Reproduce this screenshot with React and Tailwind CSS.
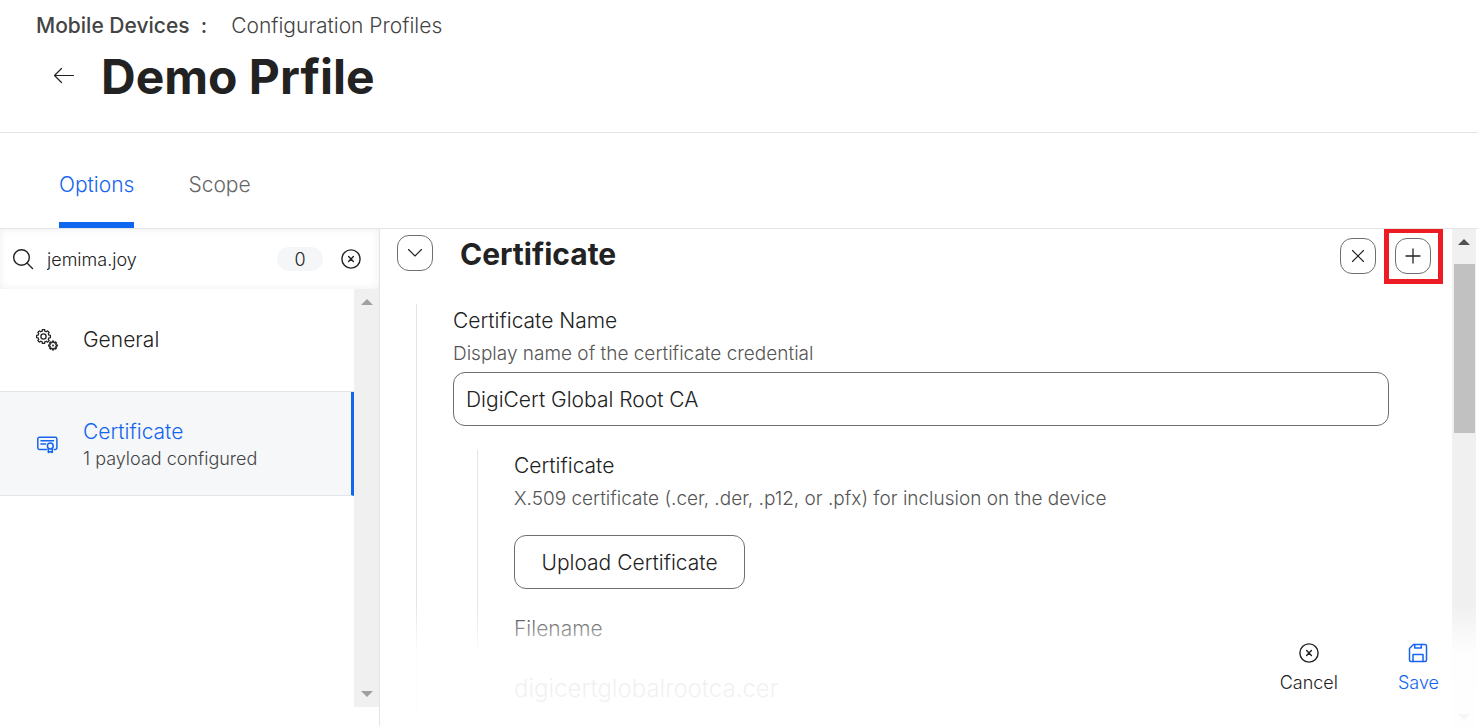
import { useState } from 'react'

const tabs = ['Options', 'Scope']

// outline of a gear with evenly spaced teeth
function gearPath(cx, cy, outer, inner, teeth) {
  const step = (Math.PI * 2) / teeth
  const pts = []
  for (let i = 0; i < teeth; i++) {
    const a = i * step - Math.PI / 2
    pts.push([inner, a - step * 0.3], [outer, a - step * 0.2], [outer, a + step * 0.2], [inner, a + step * 0.3])
  }
  return 'M' + pts.map(([r, a]) => `${(cx + r * Math.cos(a)).toFixed(2)} ${(cy + r * Math.sin(a)).toFixed(2)}`).join('L') + 'Z'
}

function Icon({ size = 20, width = 1.3, className = '', children }) {
  return (
    <svg width={size} height={size} viewBox={`0 0 ${size} ${size}`} fill="none" stroke="currentColor" strokeWidth={width}
      strokeLinecap="round" strokeLinejoin="round" className={`shrink-0 ${className}`} aria-hidden="true">
      {children}
    </svg>
  )
}

const CircleX = () => (
  <Icon width={1.4}>
    <circle cx="10" cy="10" r="9.1" />
    <path d="M7.6 7.6l4.8 4.8M12.4 7.6l-4.8 4.8" />
  </Icon>
)

const Gears = () => (
  <Icon size={22} width={1.3}>
    <path d={gearPath(7.5, 7.5, 7, 5.6, 8)} />
    <circle cx="7.5" cy="7.5" r="2.6" />
    <path d={gearPath(17, 16.5, 4.3, 3.1, 8)} />
    <circle cx="17" cy="16.5" r="0.4" />
  </Icon>
)

const CertificateIcon = () => (
  <Icon size={22} width={1.5}>
    <path d="M10.5 15.5h-7a1.7 1.7 0 0 1-1.700-1.700V5a1.700 1.700 0 0 1 1.700-1.700h15.700A1.700 1.700 0 0 1 20.900 5v8.800a1.700 1.700 0 0 1-1.700 1.700h-1" />
    <path d="M5 6.700h12.500M5 9.900h4.500" />
    <circle cx="14.300" cy="12" r="2.900" />
    <path d="M12.300 14.500v4l2-1 2 1v-4" />
  </Icon>
)

const SaveIcon = () => (
  <Icon size={20} width={1.5}>
    <path d="M5.500 1.500H17a1.500 1.500 0 0 1 1.500 1.500v14a1.500 1.500 0 0 1-1.500 1.500H3A1.500 1.500 0 0 1 1.500 17V5.500z" />
    <path d="M6.700 1.500v3.600h6.600V1.500M5 18.500v-7h10v7" />
  </Icon>
)

function Arrow({ down, className }) {
  return (
    <svg width="12" height="6" viewBox="0 0 12 6" className={className} aria-hidden="true">
      <path d={down ? 'M0 0h12L6 6z' : 'M0 6h12L6 0z'} fill="currentColor" />
    </svg>
  )
}

function SquareButton({ label, children }) {
  return (
    <button aria-label={label} className="flex size-9 items-center justify-center rounded-xl border border-[#6e6e73] bg-white text-[#222]">
      {children}
    </button>
  )
}

function PayloadItem({ icon, title, note, active }) {
  return (
    <li>
      <button className={`flex w-full items-center border-b border-[#e1e4e8] pl-9 text-left ${active ? 'h-26 border-r-3 border-r-[#0f67f0] bg-[#f5f7f9] pt-[2px] text-[#1565ee]' : 'h-[103px] text-[#222]'}`}>
        {icon}
        <span className="ml-[25px]">
          <span className="block text-[21px] leading-7">{title}</span>
          {note && <span className="block text-[18px] leading-[26px] text-[#444]">{note}</span>}
        </span>
      </button>
    </li>
  )
}

export default function App() {
  const [tab, setTab] = useState('Options')
  const [query, setQuery] = useState('jemima.joy')
  const [name, setName] = useState('DigiCert Global Root CA')

  return (
    <div className="flex h-screen flex-col overflow-hidden bg-white font-['Inter',sans-serif] font-light text-[#222]">
      <header className="h-[133px] shrink-0 border-b border-[#e4e4e4] pl-9 pt-3">
        <nav className="flex gap-6 text-[21px] leading-7 text-[#444]">
          <span className="font-medium">Mobile Devices&nbsp; :</span>
          <a href="#profiles">Configuration Profiles</a>
        </nav>
        <div className="flex items-center pl-[17px]">
          <button aria-label="Back" className="mr-[26px]">
            <Icon size={22} width={1.2}><path d="M20.500 9.500h-19M8.500 2.500l-7 7 7 7" /></Icon>
          </button>
          <h1 className="text-[48px] leading-[74px] font-bold">Demo Prfile</h1>
        </div>
      </header>

      <div role="tablist" className="flex h-24 shrink-0 gap-[54px] border-b border-[#e4e4e4] pl-[59px]">
        {tabs.map((t) => (
          <button key={t} role="tab" aria-selected={t === tab} onClick={() => setTab(t)}
            className={`border-b-6 pt-[14px] text-[21px] ${t === tab ? 'border-[#0f67f0] text-[#1565ee]' : 'border-transparent text-[#666]'}`}>
            {t}
          </button>
        ))}
      </div>

      <div className="flex min-h-0 flex-1">
        <aside className="flex w-[380px] shrink-0 flex-col border-r border-[#e4e4e4]">
          <label className="flex h-[60px] shrink-0 items-center pl-3 pr-[18px] shadow-[inset_0_0_8px_#00000012]">
            <Icon size={22} width={1.4}>
              <circle cx="9.500" cy="9.500" r="7.800" />
              <path d="M15 15l5.500 5.500" />
            </Icon>
            <input aria-label="Search payloads" value={query} onChange={(e) => setQuery(e.target.value)}
              className="ml-[13px] min-w-0 flex-1 text-[18px] outline-none" />
            <span className="mr-[18px] flex h-6 w-[46px] items-center justify-center rounded-full bg-[#f5f6f8] text-[18px]">0</span>
            <button aria-label="Clear search" onClick={() => setQuery('')}><CircleX /></button>
          </label>
          <div className="mb-[19px] flex min-h-0 flex-1">
            <ul className="flex-1">
              <PayloadItem icon={<Gears />} title="General" />
              <PayloadItem icon={<CertificateIcon />} title="Certificate" note="1 payload configured" active />
            </ul>
            <div className="flex w-[25px] flex-col items-center justify-between bg-[#f0f0f0] py-[10px] text-[#a0a0a0]">
              <Arrow />
              <Arrow down />
            </div>
          </div>
        </aside>

        <main className="relative flex min-w-0 flex-1">
          <div className="min-w-0 flex-1 overflow-hidden pl-[17px]">
            <div className="flex h-[75px] pr-[21px] pt-[6px]">
              <SquareButton label="Collapse section">
                <Icon size={20} width={1.1}><path d="M3.500 6.500l6.500 6.500 6.500-6.500" /></Icon>
              </SquareButton>
              <h2 className="ml-[27px] flex-1 text-[30px] leading-[38px] font-bold">Certificate</h2>
              <div className="flex gap-[19px] pt-[3px]">
                <SquareButton label="Remove certificate">
                  <Icon size={20} width={1.1}><path d="M4.500 4.500l11 11M15.500 4.500l-11 11" /></Icon>
                </SquareButton>
                <div className="relative h-9">
                  <SquareButton label="Add certificate">
                    <Icon size={20} width={1.3}><path d="M3 10h14M10 3v14" /></Icon>
                  </SquareButton>
                  <div className="pointer-events-none absolute -left-[11px] -right-3 -inset-y-[10px] border-5 border-[#ed1c24]" />
                </div>
              </div>
            </div>

            <div className="ml-[19px] h-full border-l border-[#e4e4e4] pl-9">
              <label htmlFor="cert-name" className="block text-[21px] leading-[34px]">Certificate Name</label>
              <p className="text-[19px] leading-8 text-[#555]">Display name of the certificate credential</p>
              <div className="pr-[63px]">
                <input id="cert-name" value={name} onChange={(e) => setName(e.target.value)}
                  className="mt-[2px] h-[54px] w-full rounded-xl border border-[#6e6e73] px-3 text-[21px] outline-none" />
              </div>
              <div className="ml-6 mt-6 h-full border-l border-[#e4e4e4] pl-9">
                <h3 className="text-[21px] leading-8">Certificate</h3>
                <p className="text-[19px] leading-[34px] text-[#555]">X.509 certificate (.cer, .der, .p12, or .pfx) for inclusion on the device</p>
                <button className="mt-[19px] h-[54px] w-[231px] rounded-xl border border-[#6e6e73] pt-[2px] text-[21px]">Upload Certificate</button>
                <h3 className="mt-6 text-[21px] leading-8">Filename</h3>
                <p className="mt-[26px] text-[24px] leading-9">digicertglobalrootca.cer</p>
              </div>
            </div>
          </div>

          <div className="mr-[2px] flex w-6 shrink-0 flex-col items-center bg-[#f0f0f0] pb-[6px] pt-[10px]">
            <Arrow className="text-[#505050]" />
            <div className="mt-[19px] h-[169px] w-[21px] bg-[#c1c1c1]" />
            <Arrow down className="mt-auto text-[#505050]" />
          </div>

          {/* footer actions sit on top of the faded content */}
          <div className="absolute inset-x-0 bottom-0 flex h-[122px] items-end justify-end gap-[60px] bg-linear-to-b from-white/0 via-white/92 via-40% to-white/95 pb-[29px] pr-[39px] text-[18px] leading-7">
            <button className="flex flex-col items-center gap-[6px]"><CircleX />Cancel</button>
            <button className="flex flex-col items-center gap-[6px] text-[#1565ee]"><SaveIcon />Save</button>
          </div>
        </main>
      </div>
    </div>
  )
}
